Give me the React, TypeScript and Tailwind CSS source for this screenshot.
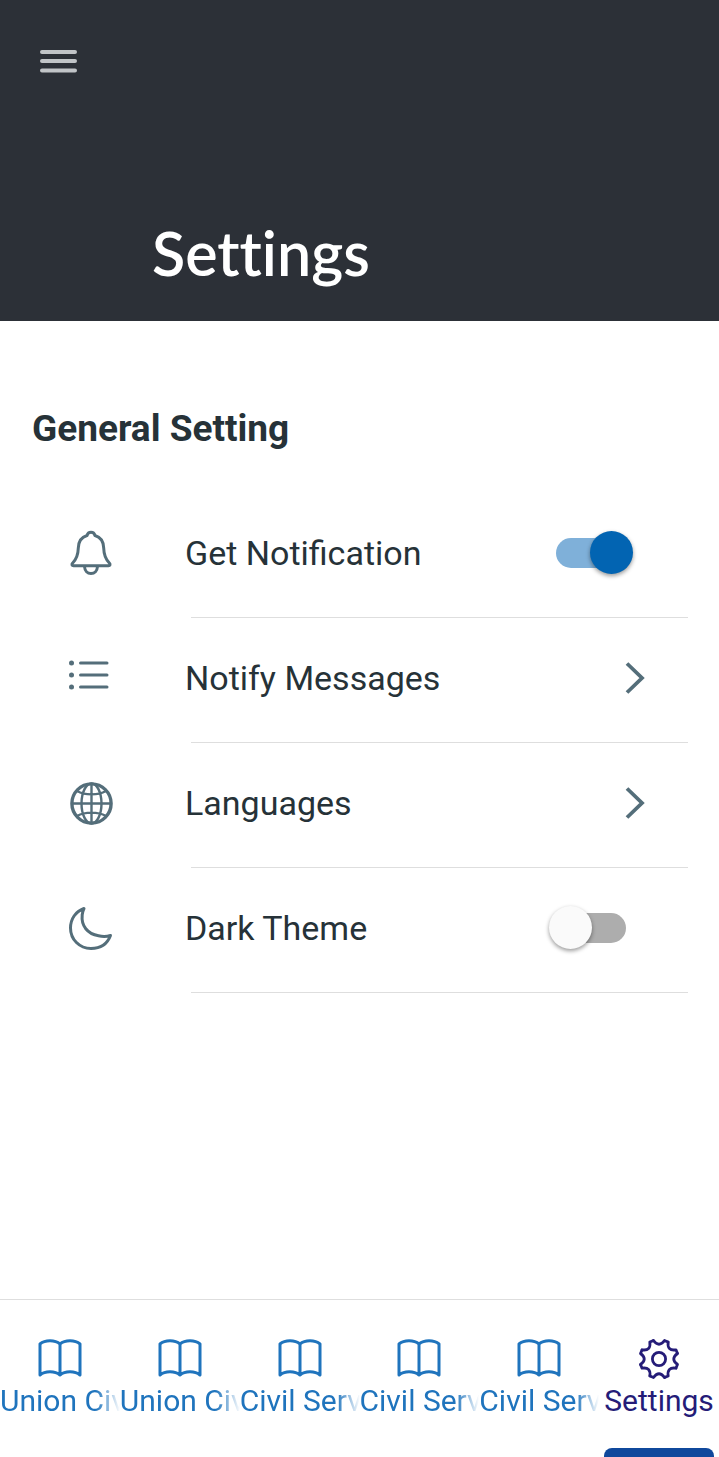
import React, { useState } from 'react';

const ROW_TEXT = 'flex-1 text-[34px] leading-[40px] text-[#263238]';

const BellIcon = () => (
  <svg className="w-12 h-12" viewBox="0 0 48 48" fill="none" stroke="currentColor" strokeWidth="3" strokeLinecap="round" strokeLinejoin="round">
    <path d="M20 6.500C20.600 4.300 22 3.300 24 3.300s3.400 1 4 3.200c6.200 1.800 8.500 6.500 8.700 12.500.2 8 2 11.500 5.800 15.200 1 1.200.6 2.500-1 2.500H6.500c-1.600 0-2-1.300-1-2.500 3.800-3.700 5.600-7.200 5.800-15.200.2-6 2.500-10.700 8.700-12.500z" />
    <path d="M17.500 37.500c.3 4.500 3 7 6.500 7s6.200-2.500 6.500-7" />
  </svg>
);

const ListIcon = () => (
  <svg className="w-12 h-12" viewBox="0 0 48 48" fill="none" stroke="currentColor" strokeWidth="3" strokeLinecap="round">
    <path d="M13.500 9h26.500M13.500 21h26.500M13.500 33h26.500" />
    <g fill="currentColor" stroke="none">
      <circle cx="4.500" cy="9" r="2.500" />
      <circle cx="4.500" cy="21" r="2.500" />
      <circle cx="4.500" cy="33" r="2.500" />
    </g>
  </svg>
);

const GlobeIcon = () => (
  <svg className="w-12 h-12" viewBox="0 0 48 48" fill="none" stroke="currentColor" strokeWidth="2.400">
    <circle cx="24.500" cy="24.500" r="19.600" strokeWidth="3.400" />
    <ellipse cx="24.500" cy="24.500" rx="10" ry="20" />
    <path d="M24.500 4.500v40M4.500 24.500h40M10 12c8 4.500 21 4.500 29 0M10 37c8-4.500 21-4.500 29 0" />
  </svg>
);

const MoonIcon = () => (
  <svg className="w-12 h-12" viewBox="0 0 48 48" fill="none" stroke="currentColor" strokeWidth="3" strokeLinejoin="round">
    <path d="M17 4.500C8.500 7.500 3.500 15 3.500 24c0 11.500 9 20.500 20.500 20.500 9.500 0 16.500-5 19.500-13-4 1.200-8 1.200-12 .3-11-2-17.500-10-16.300-20.800.2-2.500.8-4.500 1.800-6.500z" />
  </svg>
);

const ChevronIcon = () => (
  <svg className="w-6 h-9" viewBox="0 0 24 36" fill="none" stroke="currentColor" strokeWidth="3.800">
    <path d="M3 3.500l15 14.500L3 32.500" />
  </svg>
);

const BookIcon = () => (
  <svg className="w-12 h-12" viewBox="0 0 48 48" fill="none" stroke="currentColor" strokeWidth="3" strokeLinejoin="round" strokeLinecap="round">
    <path d="M24 9C19 4.700 9 4.700 4 9v31c5-4.300 15-4.300 20 0 5-4.300 15-4.300 20 0V9c-5-4.300-15-4.300-20 0zM24 9v31" />
  </svg>
);

const toothPath = 'M18.500 5.500Q24 13 29.500 5.500L33 7';

const GearIcon = () => (
  <svg className="w-12 h-12" viewBox="0 0 48 48" fill="none" stroke="currentColor" strokeWidth="2.800" strokeLinejoin="round" strokeLinecap="round">
    {[0, 45, 90, 135, 180, 225, 270, 315].map((angle) => (
      <path key={angle} d={toothPath} transform={`rotate(${angle} 24 24)`} />
    ))}
    <circle cx="24" cy="24" r="6.600" />
  </svg>
);

interface ToggleProps {
  label: string;
  checked: boolean;
  onChange: (value: boolean) => void;
}

const Toggle: React.FC<ToggleProps> = ({ label, checked, onChange }) => (
  <label className="relative flex items-center w-[84px] h-[43px] mr-[55px] cursor-pointer">
    <input
      type="checkbox"
      role="switch"
      aria-label={label}
      checked={checked}
      onChange={(e) => onChange(e.target.checked)}
      className="peer sr-only"
    />
    <span className="mx-[7px] h-[30px] flex-1 rounded-full bg-[#adadad] peer-checked:bg-[#7fb0d9]" />
    <span className="absolute left-0 top-0 size-[43px] rounded-full bg-[#fafafa] shadow-[0_2px_4px_rgba(0,0,0,0.4)] peer-checked:left-[41px] peer-checked:bg-[#0264b2]" />
  </label>
);

interface RowProps {
  icon: React.ReactNode;
  children: React.ReactNode;
}

const SettingRow: React.FC<RowProps> = ({ icon, children }) => (
  <li className="flex">
    <div className="w-[185px] shrink-0 flex items-center pl-[67px] pb-[5px] text-[#546e7a]">{icon}</div>
    <div className="flex-1 pr-[31px]">
      <div className="h-[124px] flex items-center pb-[5px]">{children}</div>
      <hr className="ml-[6px] border-[#dedede]" />
    </div>
  </li>
);

const tabs = ['Union Civ', 'Union Civ', 'Civil Serv', 'Civil Serv', 'Civil Serv'];

export default function App() {
  const [notify, setNotify] = useState(true);
  const [dark, setDark] = useState(false);

  return (
    <div className="min-h-screen flex flex-col bg-white overflow-hidden font-[Roboto,sans-serif]">
      <header className="h-[321px] flex flex-col justify-between bg-[#2c3037] pt-[49px] pb-[32px]">
        <button type="button" aria-label="Open menu" className="ml-[40px] self-start text-[#c1c4c7]">
          <svg className="w-[37px] h-[25px]" viewBox="0 0 37 25" stroke="currentColor" strokeWidth="4" strokeLinecap="round">
            <path d="M2 3h33M2 12h33M2 21.500h33" />
          </svg>
        </button>
        <h1 className="ml-[152px] text-[61px] leading-[72px] font-semibold text-white font-[Lato,sans-serif] [font-variant-ligatures:none]">Settings</h1>
      </header>

      <main className="pt-[84px]">
        <h2 className="pl-8 text-[37px] leading-[48px] font-bold text-[#263238]">General Setting</h2>
        <ul className="mt-[40px]">
          <SettingRow icon={<BellIcon />}>
            <span className={ROW_TEXT}>Get Notification</span>
            <Toggle label="Get Notification" checked={notify} onChange={setNotify} />
          </SettingRow>
          <SettingRow icon={<ListIcon />}>
            <button type="button" className="flex w-full items-center pr-[40px] text-left text-[#546e7a]">
              <span className={ROW_TEXT}>Notify Messages</span>
              <ChevronIcon />
            </button>
          </SettingRow>
          <SettingRow icon={<GlobeIcon />}>
            <button type="button" className="flex w-full items-center pr-[40px] text-left text-[#546e7a]">
              <span className={ROW_TEXT}>Languages</span>
              <ChevronIcon />
            </button>
          </SettingRow>
          <SettingRow icon={<MoonIcon />}>
            <span className={ROW_TEXT}>Dark Theme</span>
            <Toggle label="Dark Theme" checked={dark} onChange={setDark} />
          </SettingRow>
        </ul>
      </main>

      <nav className="mt-auto border-t border-[#dedede] pt-[35px]">
        <div className="grid grid-cols-6">
          {tabs.map((tab, i) => (
            <button key={i} type="button" className="flex min-w-0 flex-col items-center text-[#1f74bd]">
              <BookIcon />
              <span className="w-full overflow-hidden whitespace-nowrap text-left text-[30px] leading-[36px] mask-r-from-80% mask-r-to-100%">{tab}</span>
            </button>
          ))}
          <button type="button" aria-current="page" className="flex min-w-0 flex-col items-center text-[#251c78]">
            <GearIcon />
            <span className="text-[30px] leading-[36px]">Settings</span>
          </button>
        </div>
        <div className="mt-[29px] grid grid-cols-6">
          <span className="col-start-6 mx-[5px] h-[9px] rounded-t-lg bg-[#0f489c]" />
        </div>
      </nav>
    </div>
  );
}
